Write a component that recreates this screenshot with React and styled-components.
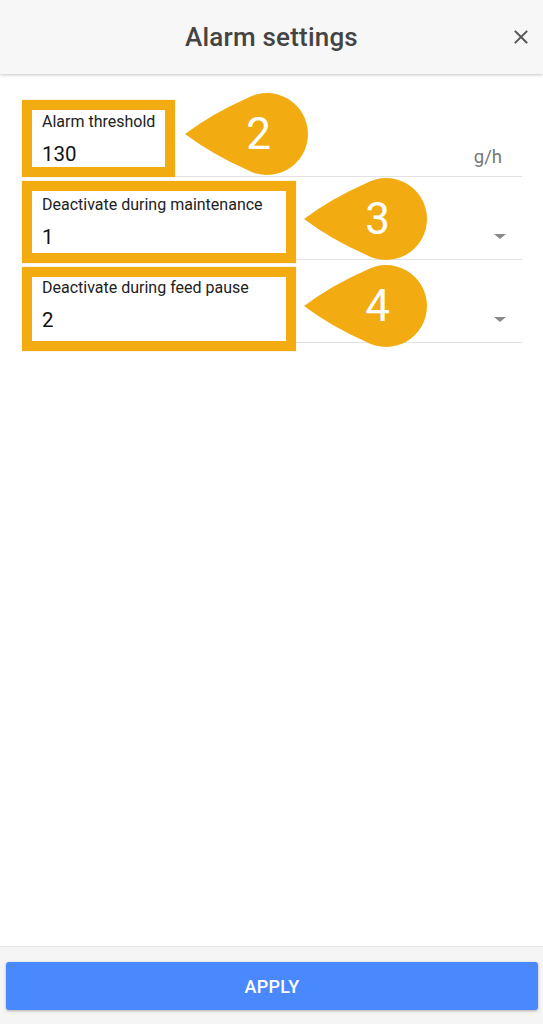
import styled, { createGlobalStyle } from 'styled-components';

const GlobalStyle = createGlobalStyle`
  html, body {
    margin: 0;
    padding: 0;
    background: #ffffff;
    font-family: Roboto, "Liberation Sans", Arial, sans-serif;
  }
  * { box-sizing: border-box; }
`;

const ACCENT = '#F2AC12';

const fields = [
  { label: 'Alarm threshold', value: '130', unit: 'g/h', number: 2, frame: { top: 6, width: 153, height: 77 }, bubble: { top: -1, left: 163 } },
  { label: 'Deactivate during maintenance', value: '1', select: true, number: 3, frame: { top: 4, width: 274, height: 82 }, bubble: { top: 1, left: 282 } },
  { label: 'Deactivate during feed pause', value: '2', select: true, number: 4, frame: { top: 7, width: 274, height: 84 }, bubble: { top: 5, left: 282 } },
];

function dropPath(w, h) {
  const r = h / 2;
  const cx = w - r;
  const cy = r;
  const cos = r / cx;
  const sin = Math.sqrt(1 - cos * cos);
  const tx = cx - r * cos;
  const t1 = cy - r * sin;
  const t2 = cy + r * sin;
  // slight outward bow on both sides of the tail
  const mx = tx / 2;
  const bow = 3;
  return `M0,${cy} Q${mx - bow},${(cy + t1) / 2 - bow} ${tx},${t1} A${r},${r} 0 1 1 ${tx},${t2} Q${mx - bow},${(cy + t2) / 2 + bow} 0,${cy} Z`;
}

function Callout({ number, top, left }) {
  const w = 123;
  const h = 82;
  return (
    <Bubble $top={top} $left={left}>
      <svg width={w} height={h} viewBox={`0 0 ${w} ${h}`}>
        <path d={dropPath(w, h)} fill={ACCENT} />
      </svg>
      <BubbleNumber>{number}</BubbleNumber>
    </Bubble>
  );
}

function CloseIcon() {
  return (
    <svg width="14" height="14" viewBox="0 0 14 14">
      <path d="M1.5 1.5 L12.5 12.5 M12.5 1.5 L1.5 12.5" stroke="#555" strokeWidth="1.9" strokeLinecap="square" />
    </svg>
  );
}

export default function App() {
  return (
    <>
      <GlobalStyle />
      <Page>
        <Header>
          <Title>Alarm settings</Title>
          <CloseButton aria-label="Close">
            <CloseIcon />
          </CloseButton>
        </Header>

        <Content>
          {fields.map(field => (
            <Row key={field.label}>
              <FieldText>
                <Label>{field.label}</Label>
                <Value>{field.value}</Value>
              </FieldText>
              {field.unit && <Unit>{field.unit}</Unit>}
              {field.select && <Arrow />}

              <Frame $top={field.frame.top} $width={field.frame.width} $height={field.frame.height} />
              <Callout number={field.number} top={field.bubble.top} left={field.bubble.left} />
            </Row>
          ))}
        </Content>

        <Footer>
          <ApplyButton>APPLY</ApplyButton>
        </Footer>
      </Page>
    </>
  );
}

const Page = styled.div`
  display: flex;
  flex-direction: column;
  min-height: 100vh;
  height: 1024px;
  background: #ffffff;
`;

const Header = styled.header`
  position: relative;
  z-index: 2;
  height: 74px;
  flex-shrink: 0;
  display: flex;
  align-items: center;
  justify-content: center;
  background: #f7f7f7;
  box-shadow: 0 1px 3px rgba(0, 0, 0, 0.22);
`;

const Title = styled.h1`
  margin: 0;
  font-size: 26px;
  font-weight: 500;
  color: #444444;
  letter-spacing: 0.2px;
`;

const CloseButton = styled.button`
  position: absolute;
  right: 15px;
  top: 30px;
  width: 14px;
  height: 14px;
  padding: 0;
  border: none;
  background: none;
  display: flex;
`;

const Content = styled.main`
  flex: 1;
  padding: 20px 21px 0 22px;
`;

const Row = styled.div`
  position: relative;
  height: 83px;
  display: flex;
  align-items: flex-start;
  border-bottom: 1px solid #e2e2e2;
`;

const FieldText = styled.div`
  flex: 1;
  display: flex;
  flex-direction: column;
  padding: 18px 0 0 20px;
`;

const Label = styled.span`
  font-size: 16px;
  line-height: 19px;
  color: #222222;
`;

const Value = styled.span`
  margin-top: 11px;
  font-size: 20.5px;
  line-height: 24px;
  color: #111111;
`;

const Unit = styled.span`
  margin: 52px 20px 0 0;
  font-size: 18.5px;
  line-height: 22px;
  color: #767676;
`;

const Arrow = styled.span`
  margin: 57px 16px 0 0;
  width: 0;
  height: 0;
  border-left: 6px solid transparent;
  border-right: 6px solid transparent;
  border-top: 5px solid #8a8a8a;
`;

const Frame = styled.div`
  position: absolute;
  left: 0;
  top: ${props => props.$top}px;
  width: ${props => props.$width}px;
  height: ${props => props.$height}px;
  border: 10px solid ${ACCENT};
  box-shadow: 0 0 1px rgba(242, 172, 18, 0.6);
  pointer-events: none;
`;

const Bubble = styled.div`
  position: absolute;
  top: ${props => props.$top}px;
  left: ${props => props.$left}px;
  width: 123px;
  height: 82px;
  display: flex;
  align-items: center;
  justify-content: center;
  padding-left: 24px;

  svg {
    position: absolute;
    left: 0;
    top: 0;
  }
`;

const BubbleNumber = styled.span`
  position: relative;
  font-size: 44px;
  line-height: 1;
  font-weight: 400;
  color: #ffffff;
`;

const Footer = styled.footer`
  height: 78px;
  flex-shrink: 0;
  padding: 15px 5px 0 6px;
  background: #f5f5f5;
  border-top: 1px solid #e6e6e6;
`;

const ApplyButton = styled.button`
  width: 100%;
  height: 48px;
  border: none;
  border-radius: 3px;
  background: #4a89fd;
  box-shadow: 0 1px 3px rgba(0, 0, 0, 0.3);
  color: #ffffff;
  font-family: Roboto, "Liberation Sans", Arial, sans-serif;
  font-size: 18px;
  font-weight: 500;
  letter-spacing: 0.3px;
`;
